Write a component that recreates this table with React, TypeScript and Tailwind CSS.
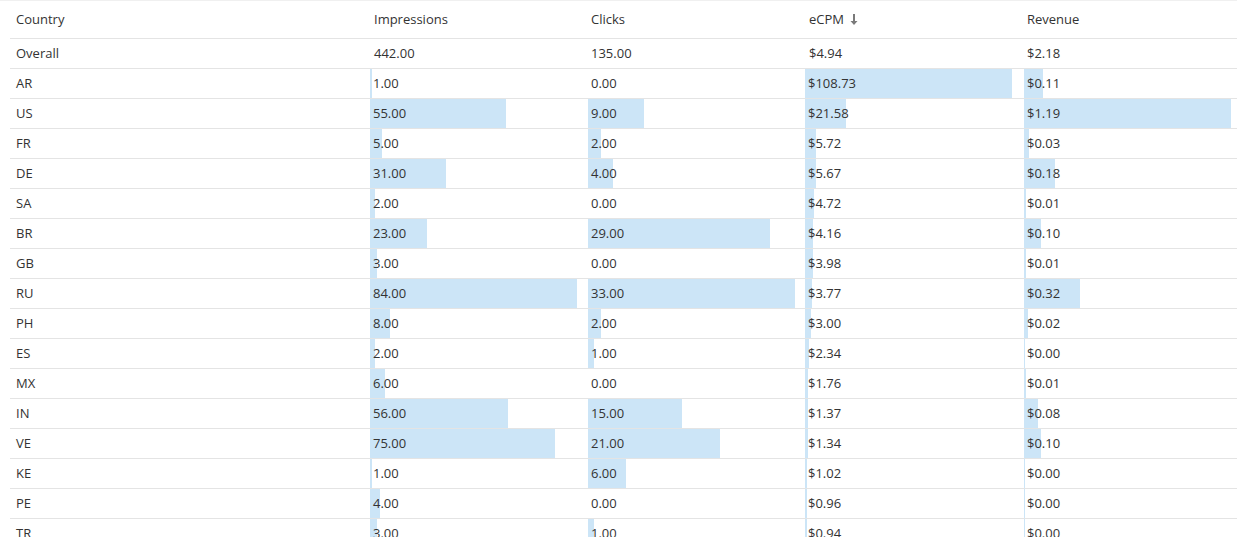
type Row = {
  country: string;
  impressions: number;
  clicks: number;
  ecpm: number;
  revenue: number;
};

const rows: Row[] = [
  { country: "AR", impressions: 1, clicks: 0, ecpm: 108.73, revenue: 0.11 },
  { country: "US", impressions: 55, clicks: 9, ecpm: 21.58, revenue: 1.19 },
  { country: "FR", impressions: 5, clicks: 2, ecpm: 5.72, revenue: 0.03 },
  { country: "DE", impressions: 31, clicks: 4, ecpm: 5.67, revenue: 0.18 },
  { country: "SA", impressions: 2, clicks: 0, ecpm: 4.72, revenue: 0.01 },
  { country: "BR", impressions: 23, clicks: 29, ecpm: 4.16, revenue: 0.1 },
  { country: "GB", impressions: 3, clicks: 0, ecpm: 3.98, revenue: 0.012 },
  { country: "RU", impressions: 84, clicks: 33, ecpm: 3.77, revenue: 0.32 },
  { country: "PH", impressions: 8, clicks: 2, ecpm: 3.0, revenue: 0.024 },
  { country: "ES", impressions: 2, clicks: 1, ecpm: 2.34, revenue: 0.004 },
  { country: "MX", impressions: 6, clicks: 0, ecpm: 1.76, revenue: 0.011 },
  { country: "IN", impressions: 56, clicks: 15, ecpm: 1.37, revenue: 0.08 },
  { country: "VE", impressions: 75, clicks: 21, ecpm: 1.34, revenue: 0.1 },
  { country: "KE", impressions: 1, clicks: 6, ecpm: 1.02, revenue: 0.004 },
  { country: "PE", impressions: 4, clicks: 0, ecpm: 0.96, revenue: 0.004 },
  { country: "TR", impressions: 3, clicks: 1, ecpm: 0.94, revenue: 0.004 },
];

const BAR_MAX = 207;
const maxImp = Math.max(...rows.map((r) => r.impressions));
const maxClicks = Math.max(...rows.map((r) => r.clicks));
const maxEcpm = Math.max(...rows.map((r) => r.ecpm));
const maxRev = Math.max(...rows.map((r) => r.revenue));

const gridCols = "grid grid-cols-[360px_218px_217px_219px_1fr]";

function BarCell({ value, max, label }: { value: number; max: number; label: string }) {
  const w = (value / max) * BAR_MAX;
  return (
    <div className="relative flex items-center h-full">
      {w > 0 && (
        <div
          className="absolute left-0 top-0 bottom-0 bg-[#cce5f7]"
          style={{ width: `${Math.max(w, 1)}px` }}
        />
      )}
      <span className="relative pl-[3px]">{label}</span>
    </div>
  );
}

function SortArrow() {
  return (
    <svg width="8" height="11" viewBox="0 0 8 11" className="ml-[6px] inline-block">
      <path d="M3 0h2v7h2.5L4 11 0.5 7H3z" fill="#7a7a7a" />
    </svg>
  );
}

export default function App() {
  const fmt = (n: number) => n.toFixed(2);
  const money = (n: number) => "$" + n.toFixed(2);

  return (
    <div
      className="min-h-screen bg-white text-[13px] text-[#333] border-t border-[#f0f0f0]"
      style={{ fontFamily: '"Open Sans", "Liberation Sans", sans-serif' }}
    >
      <div className="ml-[10px]">
        {/* header */}
        <div className={`${gridCols} h-[38px] items-center border-b border-[#e4e4e4]`}>
          <div className="pl-[6px]">Country</div>
          <div className="pl-[4px]">Impressions</div>
          <div className="pl-[3px]">Clicks</div>
          <div className="pl-[4px] flex items-center">
            eCPM
            <SortArrow />
          </div>
          <div className="pl-[3px]">Revenue</div>
        </div>

        {/* overall */}
        <div className={`${gridCols} h-[30px] items-center border-b border-[#e4e4e4]`}>
          <div className="pl-[6px]">Overall</div>
          <div className="pl-[4px]">442.00</div>
          <div className="pl-[3px]">135.00</div>
          <div className="pl-[4px]">$4.94</div>
          <div className="pl-[3px]">$2.18</div>
        </div>

        {rows.map((r) => (
          <div key={r.country} className={`${gridCols} h-[30px] border-b border-[#e4e4e4]`}>
            <div className="pl-[6px] flex items-center">{r.country}</div>
            <BarCell value={r.impressions} max={maxImp} label={fmt(r.impressions)} />
            <BarCell value={r.clicks} max={maxClicks} label={fmt(r.clicks)} />
            <BarCell value={r.ecpm} max={maxEcpm} label={money(r.ecpm)} />
            <BarCell value={r.revenue} max={maxRev} label={money(r.revenue)} />
          </div>
        ))}
      </div>
    </div>
  );
}
